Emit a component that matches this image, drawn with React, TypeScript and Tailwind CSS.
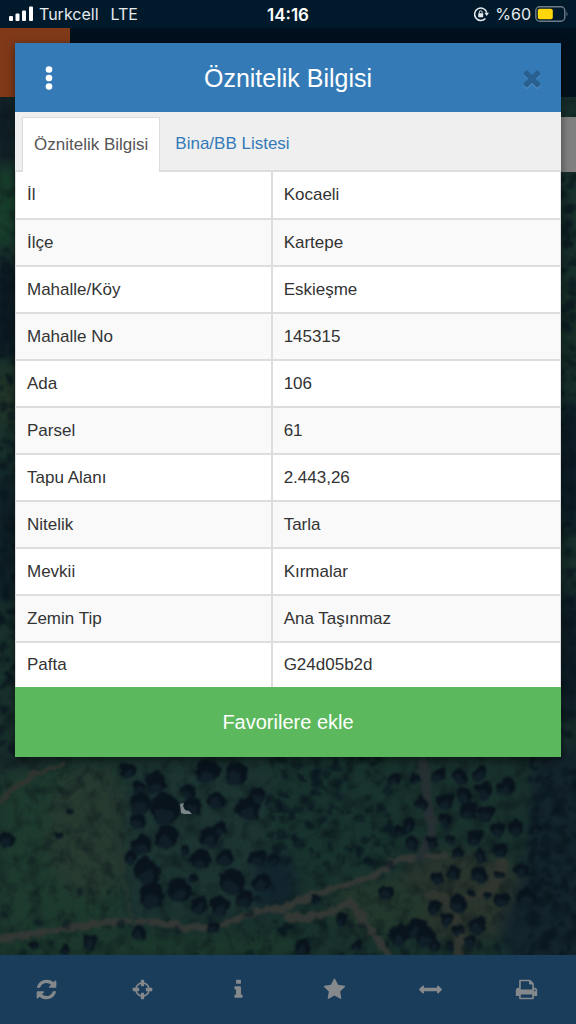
import { useState } from 'react';

const ICONS = {
  refresh:
    'M1639 1056q0 5-1 7-64 268-268 434.5t-478 166.5q-146 0-282.5-55t-243.5-157l-129 129q-19 19-45 19t-45-19-19-45v-448q0-26 19-45t45-19h448q26 0 45 19t19 45-19 45l-137 137q71 66 161 102t187 36q134 0 250-65t186-179q11-17 53-117 8-23 30-23h192q13 0 22.5 9.5t9.5 22.5zm25-800v448q0 26-19 45t-45 19h-448q-26 0-45-19t-19-45 19-45l138-138q-148-137-349-137-134 0-250 65t-186 179q-11 17-53 117-8 23-30 23h-199q-13 0-22.5-9.5t-9.5-22.5v-7q65-268 270-434.5t480-166.5q146 0 284 55.5t245 156.5l130-129q19-19 45-19t45 19 19 45z',
  crosshairs:
    'M1325 1024h-109q-26 0-45-19t-19-45v-128q0-26 19-45t45-19h109q-32-108-112.5-188.5t-188.5-112.5v109q0 26-19 45t-45 19h-128q-26 0-45-19t-19-45v-109q-108 32-188.5 112.5t-112.5 188.5h109q26 0 45 19t19 45v128q0 26-19 45t-45 19h-109q32 108 112.5 188.5t188.5 112.5v-109q0-26 19-45t45-19h128q26 0 45 19t19 45v109q108-32 188.5-112.5t112.5-188.5zm339-192v128q0 26-19 45t-45 19h-143q-37 161-154.5 278.5t-278.5 154.5v143q0 26-19 45t-45 19h-128q-26 0-45-19t-19-45v-143q-161-37-278.5-154.5t-154.5-278.5h-143q-26 0-45-19t-19-45v-128q0-26 19-45t45-19h143q37-161 154.5-278.5t278.5-154.5v-143q0-26 19-45t45-19h128q26 0 45 19t19 45v143q161 37 278.5 154.5t154.5 278.5h143q26 0 45 19t19 45z',
  info: 'M1216 1344v128q0 26-19 45t-45 19h-512q-26 0-45-19t-19-45v-128q0-26 19-45t45-19h64v-384h-64q-26 0-45-19t-19-45v-128q0-26 19-45t45-19h384q26 0 45 19t19 45v576h64q26 0 45 19t19 45zm-128-1152v192q0 26-19 45t-45 19h-256q-26 0-45-19t-19-45v-192q0-26 19-45t45-19h256q26 0 45 19t19 45z',
  star: 'M1728 647q0 22-26 48l-363 354 86 500q1 7 1 20 0 21-10.5 35.5t-30.5 14.5q-19 0-40-12l-449-236-449 236q-22 12-40 12-21 0-31.5-14.5t-10.5-35.5q0-6 2-20l86-500-364-354q-25-27-25-48 0-37 56-46l502-73 225-455q19-41 49-41t49 41l225 455 502 73q56 9 56 46z',
  arrows:
    'M1792 896q0 26-19 45l-256 256q-19 19-45 19t-45-19-19-45v-128h-1024v128q0 26-19 45t-45 19-45-19l-256-256q-19-19-19-45t19-45l256-256q19-19 45-19t45 19 19 45v128h1024v-128q0-26 19-45t45-19 45 19l256 256q19 19 19 45z',
  print:
    'M448 1536h896v-256h-896v256zm0-640h896v-384h-160q-40 0-68-28t-28-68v-160h-640v640zm1152 64q0-26-19-45t-45-19-45 19-19 45 19 45 45 19 45-19 19-45zm128 0v416q0 13-9.5 22.5t-22.5 9.5h-224v160q0 40-28 68t-68 28h-960q-40 0-68-28t-28-68v-160h-224q-13 0-22.5-9.5t-9.5-22.5v-416q0-79 56.5-135.5t135.5-56.5h64v-544q0-40 28-68t68-28h672q40 0 88 20t76 48l152 152q28 28 48 76t20 88v256h64q79 0 135.5 56.5t56.5 135.5z',
  times:
    'M1490 1322q0 40-28 68l-136 136q-28 28-68 28t-68-28l-294-294-294 294q-28 28-68 28t-68-28l-136-136q-28-28-28-68t28-68l294-294-294-294q-28-28-28-68t28-68l136-136q28-28 68-28t68 28l294 294 294-294q28-28 68-28t68 28l136 136q28 28 28 68t-28 68l-294 294 294 294q28 28 28 68z',
};

type IconName = keyof typeof ICONS;

const ROWS: [string, string][] = [
  ['İl', 'Kocaeli'],
  ['İlçe', 'Kartepe'],
  ['Mahalle/Köy', 'Eskieşme'],
  ['Mahalle No', '145315'],
  ['Ada', '106'],
  ['Parsel', '61'],
  ['Tapu Alanı', '2.443,26'],
  ['Nitelik', 'Tarla'],
  ['Mevkii', 'Kırmalar'],
  ['Zemin Tip', 'Ana Taşınmaz'],
  ['Pafta', 'G24d05b2d'],
];

const TABS = ['Öznitelik Bilgisi', 'Bina/BB Listesi'];

const TOOLS: { icon: IconName; label: string }[] = [
  { icon: 'refresh', label: 'Yenile' },
  { icon: 'crosshairs', label: 'Konum' },
  { icon: 'info', label: 'Bilgi' },
  { icon: 'star', label: 'Favoriler' },
  { icon: 'arrows', label: 'Ölçüm' },
  { icon: 'print', label: 'Yazdır' },
];

// Tree crowns on the map: x, y, radius
const TREES: [number, number, number][] = [
  [127, 673, 8], [157, 686, 11], [139, 690, 6], [208, 674, 12], [236, 676, 11], [188, 694, 7],
  [141, 706, 10], [165, 712, 15], [193, 709, 9], [217, 703, 9], [249, 711, 12], [258, 698, 8],
  [138, 724, 8], [167, 740, 12], [210, 740, 10], [220, 731, 7], [142, 748, 10], [130, 760, 6],
  [147, 774, 13], [201, 762, 10], [226, 760, 9], [257, 761, 8], [232, 784, 13], [180, 793, 12],
  [153, 798, 13], [199, 808, 9], [220, 809, 10], [245, 802, 9], [262, 785, 9], [273, 762, 6],
  [138, 835, 7], [90, 845, 7], [34, 847, 5], [214, 830, 7], [185, 753, 4], [193, 780, 4],
  [395, 681, 6], [415, 681, 5], [438, 678, 7], [459, 678, 8], [480, 676, 7], [422, 706, 7],
  [445, 704, 8], [464, 698, 8], [484, 693, 8], [506, 690, 9], [468, 714, 9], [486, 716, 8],
  [445, 723, 7], [409, 728, 7], [498, 733, 8], [516, 731, 8], [536, 732, 6], [411, 746, 7],
  [432, 745, 6], [451, 742, 5], [475, 741, 8], [458, 755, 6], [480, 757, 7], [500, 753, 7],
  [438, 781, 7], [454, 776, 7], [479, 778, 8], [522, 773, 7], [500, 777, 4], [472, 795, 4],
  [435, 810, 7], [458, 806, 9], [487, 798, 4], [502, 802, 8], [386, 796, 7], [447, 821, 7],
  [478, 828, 9], [458, 833, 5], [470, 844, 6], [435, 849, 6], [400, 838, 11], [417, 832, 11],
  [425, 840, 10], [342, 823, 7], [316, 803, 5], [303, 850, 8], [527, 800, 10], [450, 849, 5],
  [7, 742, 8], [69, 714, 3], [60, 738, 4], [65, 852, 4], [400, 734, 5], [357, 849, 5],
];

// Small repeatable generator, so the foliage is the same on every render
function scatter(seed: number, count: number, x: number, y: number, w: number, h: number) {
  let s = seed;
  const next = () => {
    s = (s * 16807) % 2147483647;
    return s / 2147483647;
  };
  return Array.from({ length: count }, () => [x + next() * w, y + next() * h, 1 + next() * 4]);
}

const FOLIAGE = [
  ...scatter(11, 150, 268, 658, 125, 110),
  ...scatter(29, 200, 530, 660, 50, 200),
  ...scatter(47, 110, 0, 150, 18, 510),
  ...scatter(83, 130, 558, 80, 20, 580),
  ...scatter(61, 25, 0, 790, 280, 70),
  ...scatter(97, 30, 270, 825, 240, 35),
];

function Icon({ name, className }: { name: IconName; className: string }) {
  return (
    <svg viewBox="0 0 1792 1792" fill="currentColor" aria-hidden="true" className={className}>
      <path d={ICONS[name]} />
    </svg>
  );
}

function StatusBar() {
  return (
    <div className="grid h-7 grid-cols-3 items-center bg-[#001a2c] font-['Inter',sans-serif] text-base text-[#e6eaed]">
      <div className="flex items-center pl-2">
        <svg viewBox="0 0 26 16" fill="currentColor" aria-hidden="true" className="h-4 w-[26px] text-white">
          <rect x="1" y="10" width="4" height="5" rx="1" />
          <rect x="7.500" y="7.500" width="4" height="7.500" rx="1" />
          <rect x="14" y="4.500" width="4" height="10.500" rx="1" />
          <rect x="21" y="0.500" width="4" height="14.500" rx="1" />
        </svg>
        <span className="ml-[5px]">Turkcell</span>
        <span className="ml-3">LTE</span>
      </div>
      <span className="pt-0.5 text-center text-[17px] leading-6 font-semibold text-white">14:16</span>
      <div className="flex items-center justify-end pr-[7px]">
        <svg viewBox="0 0 16 16" fill="none" stroke="currentColor" strokeWidth="1.500" aria-hidden="true" className="size-4">
          <path d="M12.400 12.400A6.200 6.200 0 1 1 13.800 6.600" />
          <path d="M11.400 6.800h4.600l-2.300 3.200z" fill="currentColor" stroke="none" />
          <rect x="5.200" y="7.200" width="5" height="4" rx="0.600" fill="currentColor" stroke="none" />
          <path d="M6.300 7.500V6.200a1.400 1.400 0 0 1 2.800 0v1.300" strokeWidth="1" />
        </svg>
        <span className="ml-[6px]">%60</span>
        <svg viewBox="0 0 34 16" aria-hidden="true" className="ml-1 h-4 w-[34px]">
          <rect x="0.800" y="0.800" width="29" height="14.400" rx="4" fill="none" stroke="#6d7b86" strokeWidth="1.400" />
          <rect x="2.800" y="2.800" width="15" height="10.400" rx="2" fill="#ffd60a" />
          <path d="M31.500 5.500q2 2.500 0 5z" fill="#6d7b86" />
        </svg>
      </div>
    </div>
  );
}

function SatelliteMap() {
  return (
    <svg
      viewBox="0 0 576 858"
      preserveAspectRatio="xMidYMid slice"
      aria-hidden="true"
      className="absolute inset-0 size-full"
    >
      <defs>
        <filter id="soft" x="-20%" y="-20%" width="140%" height="140%" colorInterpolationFilters="sRGB">
          <feGaussianBlur stdDeviation="7" />
        </filter>
        <filter id="crown" x="-5%" y="-5%" width="110%" height="110%" colorInterpolationFilters="sRGB">
          <feTurbulence type="fractalNoise" baseFrequency="0.1" numOctaves="3" seed="4" result="noise" />
          <feDisplacementMap in="SourceGraphic" in2="noise" scale="9" xChannelSelector="R" yChannelSelector="G" />
          <feGaussianBlur stdDeviation="0.800" />
        </filter>
        <filter id="grain" x="0" y="0" width="100%" height="100%" colorInterpolationFilters="sRGB">
          <feTurbulence type="fractalNoise" baseFrequency="0.07" numOctaves="4" seed="9" />
          <feColorMatrix values="0 0 0 0 0.040  0 0 0 0 0.080  0 0 0 0 0.100  1.200 0 0 0 -0.500" />
        </filter>
      </defs>
      <rect width="576" height="858" fill="#18312c" />
      <g filter="url(#soft)">
        <ellipse cx="6" cy="110" rx="14" ry="45" fill="#183f2c" />
        <ellipse cx="4" cy="30" rx="14" ry="40" fill="#101e26" />
        <ellipse cx="6" cy="210" rx="14" ry="50" fill="#0c1a24" />
        <ellipse cx="6" cy="300" rx="12" ry="30" fill="#24382a" />
        <ellipse cx="6" cy="440" rx="14" ry="70" fill="#0f2027" />
        <ellipse cx="570" cy="230" rx="12" ry="50" fill="#182f28" />
        <ellipse cx="570" cy="370" rx="14" ry="70" fill="#0d1b27" />
        <ellipse cx="570" cy="560" rx="14" ry="70" fill="#0e1c26" />
        <rect x="0" y="670" width="124" height="165" fill="#1d3a2e" />
        <ellipse cx="90" cy="735" rx="42" ry="65" fill="#263a30" />
        <rect x="125" y="660" width="148" height="165" fill="#1b3331" />
        <rect x="270" y="650" width="125" height="130" fill="#18332e" />
        <ellipse cx="10" cy="662" rx="50" ry="12" fill="#182a2b" />
        <ellipse cx="460" cy="800" rx="70" ry="45" fill="#29342d" />
        <ellipse cx="380" cy="810" rx="50" ry="28" fill="#23382d" />
        <path d="M535 650h50v220h-75l-10-40 25-60z" fill="#13242c" />
        <ellipse cx="275" cy="785" rx="22" ry="28" fill="#12252f" />
        <rect x="0" y="840" width="300" height="18" fill="#1c382c" />
      </g>
      <rect width="576" height="858" filter="url(#grain)" />
      <g fill="none" stroke="#333835" strokeLinecap="round" filter="url(#crown)">
        <path d="M0 706Q18 680 64 667" strokeWidth="5" stroke="#303530" />
        <path d="M0 841Q45 836 90 828T170 828T235 823T285 812Q300 800 345 788T390 765Q410 758 445 760" strokeWidth="7" />
        <path d="M108 670L124 790 134 828" strokeWidth="4" stroke="#24362f" />
        <path d="M288 820Q318 824 350 804L388 858" strokeWidth="8" />
        <path d="M423 664L432 740 420 760" strokeWidth="10" stroke="#263034" />
        <path d="M430 798Q460 798 460 858M470 800Q500 795 502 765" strokeWidth="10" stroke="#30362f" />
      </g>
      <g filter="url(#crown)">
        {FOLIAGE.map(([x, y, r], i) => (
          <circle key={i} cx={x} cy={y} r={r} fill="#0a1720" fillOpacity="0.600" />
        ))}
        {TREES.map(([x, y, r], i) => (
          <g key={i}>
            <circle cx={x} cy={y} r={r} fill="#09131c" />
            <circle cx={x - r * 0.1} cy={y + r * 0.5} r={r * 0.6} fill="#12222a" fillOpacity="0.800" />
          </g>
        ))}
      </g>
      <path d="M184 706l-4 1 1 9 3 1 8 0-3-3-4-1-2-4z" fill="#7b8585" />
    </svg>
  );
}

function AttributeDialog() {
  const [tab, setTab] = useState(0);

  return (
    <section
      role="dialog"
      aria-labelledby="dialog-title"
      className="absolute inset-x-[15px] top-[15px] bg-[#efefef] shadow-[0_3px_9px_rgba(0,0,0,0.5)]"
    >
      <header className="grid h-[69px] grid-cols-[68px_1fr_68px] items-center bg-[#337ab7] text-white">
        <button type="button" aria-label="Menü" className="flex h-full items-center justify-center">
          <svg viewBox="0 0 8 24" fill="currentColor" aria-hidden="true" className="h-6 w-2">
            <circle cx="4" cy="3.500" r="3.300" />
            <circle cx="4" cy="12" r="3.300" />
            <circle cx="4" cy="20.500" r="3.300" />
          </svg>
        </button>
        <h1 id="dialog-title" className="text-center text-[25px] leading-8">
          Öznitelik Bilgisi
        </h1>
        <button type="button" aria-label="Kapat" className="flex h-full items-center justify-end pr-4">
          <Icon name="times" className="size-[26px] text-black opacity-20 drop-shadow-[0_1px_0_#fff]" />
        </button>
      </header>

      <div role="tablist" className="flex gap-1 border-b-2 border-[#ddd] px-[7px] pt-[5px]">
        {TABS.map((label, i) => (
          <button
            key={label}
            type="button"
            role="tab"
            aria-selected={tab === i}
            onClick={() => setTab(i)}
            className={
              tab === i
                ? '-mb-0.5 h-[55px] border border-b-0 border-[#ddd] bg-white px-[11px] text-[17px] text-[#555]'
                : 'h-[53px] px-[11px] text-[17px] text-[#337ab7]'
            }
          >
            {label}
          </button>
        ))}
      </div>

      <table className="w-full border-collapse bg-white text-[17px] leading-6 text-[#333]">
        <tbody>
          {ROWS.map(([name, value]) => (
            <tr key={name} className="h-[47px] border-b-2 border-[#ddd] last:h-[45px] last:border-b-0 even:bg-[#f9f9f9]">
              <th scope="row" className="w-[47%] border-x border-r-2 border-[#ddd] px-[11px] text-left font-normal">
                {name}
              </th>
              <td className="border-r border-[#ddd] px-[11px]">{value}</td>
            </tr>
          ))}
        </tbody>
      </table>

      <button type="button" className="h-[70px] w-full bg-[#5cb85c] text-xl text-white">
        Favorilere ekle
      </button>
    </section>
  );
}

export default function App() {
  return (
    <div className="flex min-h-screen flex-col bg-[#00101c] font-['Liberation_Sans',Arial,sans-serif]">
      <StatusBar />
      <main className="relative flex flex-1 flex-col">
        <div className="h-[69px] bg-[#00101c]">
          <div className="h-full w-[70px] bg-[#803a1a]" />
        </div>
        <div className="relative flex min-h-[700px] flex-1 justify-end overflow-hidden pt-5">
          <SatelliteMap />
          <div className="relative h-[55px] w-10 bg-[#808080]" />
        </div>
        <nav className="grid h-[69px] grid-cols-6 bg-[#1a3d5c] text-[#85898c]">
          {TOOLS.map(({ icon, label }) => (
            <button key={icon} type="button" aria-label={label} className="flex items-center justify-center pr-1">
              <Icon name={icon} className="size-[23px]" />
            </button>
          ))}
        </nav>
        <AttributeDialog />
      </main>
    </div>
  );
}
